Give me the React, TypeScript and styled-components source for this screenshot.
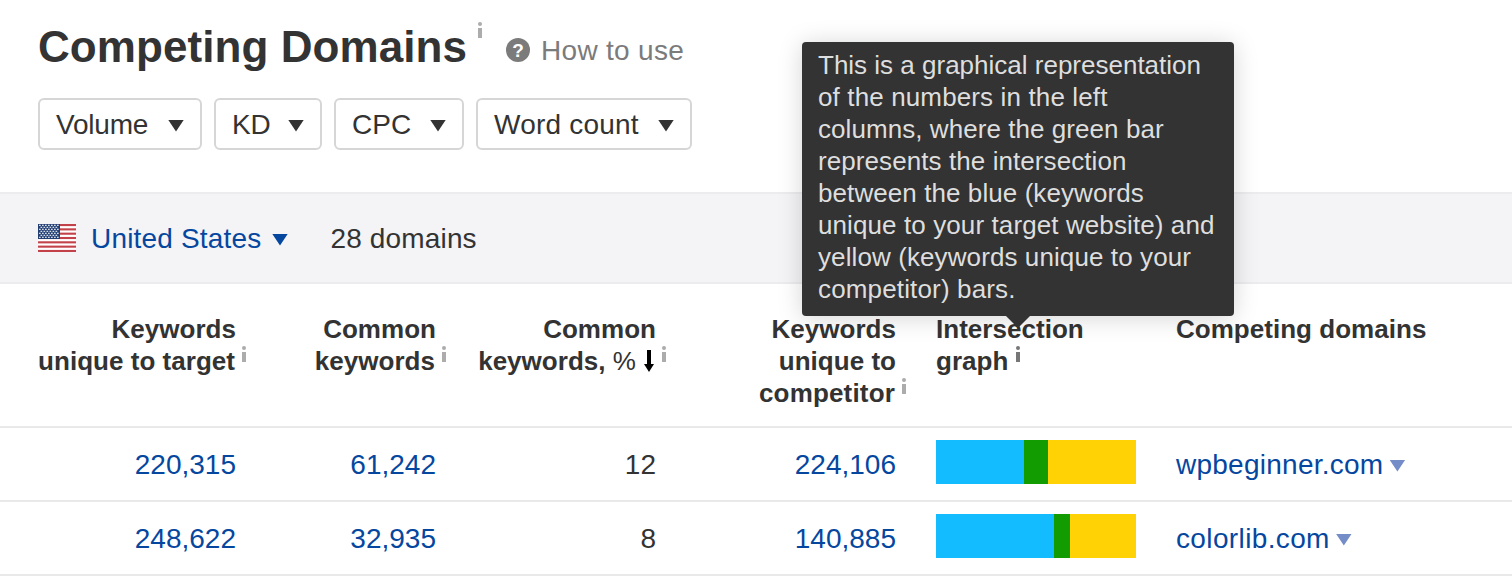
import React from "react";
import styled, { createGlobalStyle } from "styled-components";

const GlobalStyle = createGlobalStyle`
  * { box-sizing: border-box; }
  body {
    margin: 0;
    background: #fff;
    color: #333;
    font-family: "Liberation Sans", Arial, sans-serif;
    font-size: 28px;
    overflow: hidden;
  }
`;

const Page = styled.main`
  width: 1512px;
  height: 582px;
  overflow: hidden;
`;

const PageHeader = styled.header`
  height: 192px;
  padding: 22px 38px 0;
`;

const TitleRow = styled.div`
  display: flex;
  align-items: flex-start;
  height: 76px;
`;

const Title = styled.h1`
  width: 429px;
  margin: 0;
  font-size: 44px;
  line-height: 50px;
  letter-spacing: 0.07px;
  white-space: nowrap;
`;

const InfoMark = styled.span<{ $active?: boolean }>`
  display: inline-flex;
  flex-direction: column;
  gap: 2px;
  width: 4px;
  height: 16px;
  margin: 0 -10px 0 ${(p) => (p.$active ? 8 : 7)}px;
  vertical-align: 20px;
  color: ${(p) => (p.$active ? "#777" : "#acacac")};

  &::before {
    content: "";
    height: 4px;
    border-radius: 2px;
    background: currentColor;
  }

  &::after {
    content: "";
    height: 10px;
    background: currentColor;
  }
`;

const TitleInfo = styled(InfoMark)`
  margin: 0 24px 0 11px;
`;

const HelpLink = styled.a`
  display: flex;
  align-items: center;
  gap: 11px;
  height: 32px;
  margin-top: 13px;
  color: #7b7b7b;
  letter-spacing: 0.3px;
  white-space: nowrap;
`;

const QuestionBadge = styled.span`
  width: 24px;
  height: 24px;
  margin-bottom: 2px;
  border-radius: 50%;
  background: #7b7b7b;
  color: #fff;
  font-size: 19px;
  font-weight: 700;
  line-height: 25px;
  letter-spacing: 0;
  text-align: center;
`;

const Filters = styled.div`
  display: flex;
  gap: 12px;
`;

const FilterButton = styled.button<{ $width: number; $tracking: number }>`
  display: flex;
  align-items: center;
  justify-content: space-between;
  width: ${(p) => p.$width}px;
  height: 52px;
  padding: 2px 16px 0;
  border: 2px solid #d6d6d6;
  border-radius: 6px;
  background: #fff;
  color: #333;
  font: inherit;
  letter-spacing: ${(p) => p.$tracking}px;
  white-space: nowrap;
`;

const Caret = styled.span`
  flex: none;
  width: 16px;
  height: 12px;
  margin-top: 1px;
  background: currentColor;
  clip-path: polygon(0 0, 100% 0, 50% 100%);
`;

const Summary = styled.section`
  display: flex;
  align-items: center;
  height: 92px;
  padding-left: 38px;
  border-top: 2px solid #ececee;
  border-bottom: 2px solid #ececee;
  background: #f4f4f7;
`;

const CountryPicker = styled.div`
  display: flex;
  align-items: center;
  width: 292.5px;
  color: #05479f;
  white-space: nowrap;

  svg {
    margin-right: 15px;
  }

  ${Caret} {
    margin-top: 3px;
  }
`;

const CountryName = styled.span`
  width: 181px;
  padding-top: 2px;
  letter-spacing: 0.17px;
`;

const DomainCount = styled.span`
  padding-top: 2px;
  letter-spacing: 0.15px;
`;

const GridRow = styled.div`
  display: grid;
  grid-template-columns: 236px 200px 220px 240px 240px 1fr;
  border-bottom: 2px solid #e9e9e9;
`;

const HeadRow = styled(GridRow)`
  height: 144px;
  padding-top: 29px;
  font-size: 26px;
  font-weight: 700;
  line-height: 32px;
  letter-spacing: 0.03px;
  white-space: nowrap;
`;

const HeadCell = styled.div<{ $left?: boolean }>`
  position: relative;
  padding-left: ${(p) => (p.$left ? "40px" : 0)};
  text-align: ${(p) => (p.$left ? "left" : "right")};
`;

const WideWord = styled.span`
  letter-spacing: 0.17px;
`;

const Percent = styled.span`
  font-weight: 400;
`;

const SortArrow = styled.svg`
  width: 10px;
  height: 22px;
  margin: 0 1px 0 8px;
  vertical-align: -2px;
`;

const DataRow = styled(GridRow)`
  height: 74px;
  align-items: center;
`;

const NumberCell = styled.div<{ $plain?: boolean }>`
  padding-top: 2px;
  color: ${(p) => (p.$plain ? "#333" : "#05479f")};
  text-align: right;
`;

const Graph = styled.div`
  display: flex;
  width: 200px;
  height: 44px;
  margin: 0 0 4px 40px;
`;

const Segment = styled.span<{ $color: string }>`
  background: ${(p) => p.$color};
`;

const DomainCell = styled.div<{ $tracking: number }>`
  display: flex;
  align-items: center;
  gap: 6px;
  padding: 2px 0 0 40px;
  color: #05479f;
  letter-spacing: ${(p) => p.$tracking}px;

  ${Caret} {
    color: #748cc8;
  }
`;

const Tooltip = styled.div`
  position: absolute;
  z-index: 2;
  left: -94px;
  bottom: calc(100% - 3px);
  width: 432px;
  height: 274px;
  padding: 7px 16px;
  border-radius: 4px;
  background: #333;
  box-shadow: 0 2px 24px rgba(0, 0, 0, 0.17);
  color: #dedede;
  font-weight: 400;
  text-align: left;

  &::after {
    content: "";
    position: absolute;
    top: 100%;
    left: 204px;
    border: 12px solid transparent;
    border-top-color: #333;
    border-bottom: 0;
  }
`;

const TooltipLine = styled.span<{ $tracking: number }>`
  display: block;
  letter-spacing: ${(p) => p.$tracking}px;
`;

const filters = [
  { label: "Volume", width: 164, tracking: -0.2 },
  { label: "KD", width: 108, tracking: -0.3 },
  { label: "CPC", width: 130, tracking: 0 },
  { label: "Word count", width: 216, tracking: 0.22 },
];

const tooltipLines = [
  { text: "This is a graphical representation", tracking: 0 },
  { text: "of the numbers in the left", tracking: 0.13 },
  { text: "columns, where the green bar", tracking: 0.06 },
  { text: "represents the intersection", tracking: 0.08 },
  { text: "between the blue (keywords", tracking: 0.08 },
  { text: "unique to your target website) and", tracking: 0.1 },
  { text: "yellow (keywords unique to your", tracking: 0.1 },
  { text: "competitor) bars.", tracking: 0.15 },
];

const rows = [
  { unique: "220,315", common: "61,242", percent: "12", competitor: "224,106", parts: [88, 24, 88], domain: "wpbeginner.com", tracking: 0.25 },
  { unique: "248,622", common: "32,935", percent: "8", competitor: "140,885", parts: [118, 16, 66], domain: "colorlib.com", tracking: 0.37 },
];

const segmentColors = ["#12bcfe", "#139c02", "#ffd205"];

function UsFlag() {
  const stars: React.ReactNode[] = [];
  for (let r = 0; r < 7; r++) {
    for (let c = 0; c < (r % 2 ? 6 : 7); c++) {
      stars.push(
        <rect key={`${r}-${c}`} x={1 + c * 3 + (r % 2 ? 1.5 : 0)} y={0.7 + r * 2} width="1.7" height="1.3" />
      );
    }
  }
  return (
    <svg width="38" height="28" viewBox="0 0 38 28" aria-hidden="true">
      <rect width="38" height="28" fill="#fff" />
      {[0, 1, 2, 3, 4, 5, 6].map((n) => (
        <rect key={n} y={n * 4.32} width="38" height="2.1" fill="#c3424a" />
      ))}
      <rect width="22" height="15" fill="#233f73" />
      <g fill="#d5dbe6">{stars}</g>
    </svg>
  );
}

export default function App() {
  return (
    <Page>
      <GlobalStyle />
      <PageHeader>
        <TitleRow>
          <Title>Competing Domains</Title>
          <TitleInfo />
          <HelpLink>
            <QuestionBadge>?</QuestionBadge>
            How to use
          </HelpLink>
        </TitleRow>
        <Filters>
          {filters.map((f) => (
            <FilterButton key={f.label} $width={f.width} $tracking={f.tracking}>
              {f.label}
              <Caret />
            </FilterButton>
          ))}
        </Filters>
      </PageHeader>

      <Summary>
        <CountryPicker>
          <UsFlag />
          <CountryName>United States</CountryName>
          <Caret />
        </CountryPicker>
        <DomainCount>28 domains</DomainCount>
      </Summary>

      <HeadRow>
        <HeadCell>
          Keywords
          <br />
          unique to target
          <InfoMark />
        </HeadCell>
        <HeadCell>
          Common
          <br />
          keywords
          <InfoMark />
        </HeadCell>
        <HeadCell>
          Common
          <br />
          keywords, <Percent>%</Percent>
          <SortArrow viewBox="0 0 10 22" aria-hidden="true">
            <path d="M3 0h4v14h3l-5 8-5-8h3z" fill="#000" />
          </SortArrow>
          <InfoMark />
        </HeadCell>
        <HeadCell>
          Keywords
          <br />
          unique to
          <br />
          <WideWord>competitor</WideWord>
          <InfoMark />
        </HeadCell>
        <HeadCell $left>
          Intersection
          <br />
          graph
          <InfoMark $active />
          <Tooltip>
            {tooltipLines.map((line) => (
              <TooltipLine key={line.text} $tracking={line.tracking}>
                {line.text}
              </TooltipLine>
            ))}
          </Tooltip>
        </HeadCell>
        <HeadCell $left>Competing domains</HeadCell>
      </HeadRow>

      {rows.map((row) => (
        <DataRow key={row.domain}>
          <NumberCell>{row.unique}</NumberCell>
          <NumberCell>{row.common}</NumberCell>
          <NumberCell $plain>{row.percent}</NumberCell>
          <NumberCell>{row.competitor}</NumberCell>
          <Graph>
            {row.parts.map((part, i) => (
              <Segment key={i} $color={segmentColors[i]} style={{ width: part }} />
            ))}
          </Graph>
          <DomainCell $tracking={row.tracking}>
            {row.domain}
            <Caret />
          </DomainCell>
        </DataRow>
      ))}
    </Page>
  );
}
